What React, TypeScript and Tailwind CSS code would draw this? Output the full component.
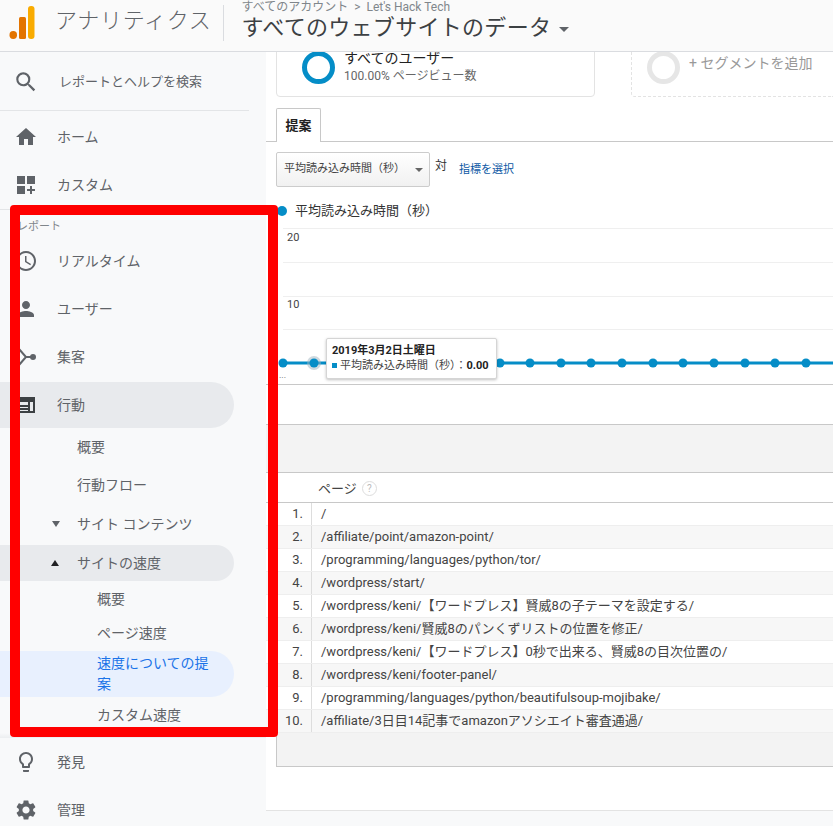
import type { ReactNode } from "react";
import { MdAccessTime, MdHome, MdLightbulbOutline, MdPerson, MdSearch, MdSettings } from "react-icons/md";

const PAGES = [
  "/",
  "/affiliate/point/amazon-point/",
  "/programming/languages/python/tor/",
  "/wordpress/start/",
  "/wordpress/keni/【ワードプレス】賢威8の子テーマを設定する/",
  "/wordpress/keni/賢威8のパンくずリストの位置を修正/",
  "/wordpress/keni/【ワードプレス】0秒で出来る、賢威8の目次位置の/",
  "/wordpress/keni/footer-panel/",
  "/programming/languages/python/beautifulsoup-mojibake/",
  "/affiliate/3日目14記事でamazonアソシエイト審査通過/",
];

const DOTS = [17, 48, 79, 110, 234, 264, 295, 325, 356, 387, 417, 448, 479, 509, 540];

function CustomIcon() {
  return (
    <svg width="24" height="24" viewBox="0 0 24 24" fill="#5f6368">
      <rect x="3" y="3" width="8" height="8" />
      <rect x="13" y="3" width="8" height="8" />
      <rect x="3" y="13" width="8" height="8" />
      <path d="M16 13h2v3h3v2h-3v3h-2v-3h-3v-2h3z" />
    </svg>
  );
}

function AcquisitionIcon() {
  return (
    <svg width="24" height="24" viewBox="0 0 24 24" fill="none" stroke="#5f6368" strokeWidth="2">
      <path d="M5 4l7 8-7 8M12 12h6" />
      <circle cx="19" cy="12" r="3" fill="#5f6368" stroke="none" />
    </svg>
  );
}

function BehaviorIcon() {
  return (
    <svg width="24" height="24" viewBox="0 0 24 24" fill="none">
      <path d="M3 4h18v5H3z" fill="#3c4043" />
      <path d="M4 5h16v14H4zM4 13h11M4 16h11M15 9v10" stroke="#3c4043" strokeWidth="2" />
    </svg>
  );
}

function NavRow({ icon, label }: { icon: ReactNode; label: string }) {
  return (
    <div className="flex h-[48px] items-center text-[14px] text-[#5f6368]">
      <div className="ml-[14px] flex w-[24px] justify-center">{icon}</div>
      <span className="ml-[19px]">{label}</span>
    </div>
  );
}

function Sidebar() {
  return (
    <aside className="w-[266px] shrink-0 bg-[#f8f9fa]">
      <div className="flex h-[59px] w-[249px] items-center border-b border-[#e3e5e7] pt-[2px] text-[13px] text-[#5f6368]">
        <MdSearch className="ml-[13px] text-[#5f6368]" size={26} />
        <span className="ml-[20px]">レポートとヘルプを検索</span>
      </div>
      <div className="mt-[2px]">
        <NavRow icon={<MdHome size={24} color="#5f6368" />} label="ホーム" />
        <NavRow icon={<CustomIcon />} label="カスタム" />
      </div>
      <div className="border-t border-[#e3e5e7]">
        <div className="flex h-[27px] items-end pl-[17px] text-[11px] text-[#80868b]">
          <span className="leading-[20px]">レポート</span>
        </div>
        <NavRow icon={<MdAccessTime size={24} color="#5f6368" />} label="リアルタイム" />
        <NavRow icon={<MdPerson size={24} color="#5f6368" />} label="ユーザー" />
        <NavRow icon={<AcquisitionIcon />} label="集客" />
        <div className="flex h-[48px] items-center">
          <div className="flex h-[46px] w-[234px] items-center rounded-r-full bg-[#e8eaed] text-[14px] text-[#5f6368]">
            <div className="ml-[14px] flex w-[24px] justify-center">
              <BehaviorIcon />
            </div>
            <span className="ml-[19px]">行動</span>
          </div>
        </div>
        <div className="flex h-[37px] items-center pl-[77px] text-[14px] text-[#5f6368]">概要</div>
        <div className="flex h-[38px] items-center pl-[77px] text-[14px] text-[#5f6368]">行動フロー</div>
        <div className="flex h-[40px] items-center text-[14px] text-[#5f6368]">
          <span className="ml-[52px] h-0 w-0 border-x-[4px] border-t-[6px] border-x-transparent border-t-[#5f6368]" />
          <span className="ml-[17px]">サイト コンテンツ</span>
        </div>
        <div className="mt-[1px] flex h-[36px] w-[234px] items-center rounded-r-full bg-[#e8eaed] text-[14px] text-[#5f6368]">
          <span className="ml-[51px] h-0 w-0 border-x-[4px] border-b-[6px] border-x-transparent border-b-[#202124]" />
          <span className="ml-[18px]">サイトの速度</span>
        </div>
        <div className="flex h-[36px] items-center pl-[97px] text-[14px] text-[#5f6368]">概要</div>
        <div className="flex h-[34px] items-center pb-[2px] pl-[97px] text-[14px] text-[#5f6368]">ページ速度</div>
        <div className="flex h-[46px] w-[234px] items-center rounded-r-full bg-[#e8f0fe] pl-[97px] text-[14px] leading-[21px] text-[#1a73e8]">
          <span className="w-[118px]">速度についての提案</span>
        </div>
        <div className="flex h-[36px] items-center pl-[97px] text-[14px] text-[#5f6368]">カスタム速度</div>
        <div className="h-[5px] bg-gradient-to-b from-[#f8f9fa] to-[#eceef0]" />
      </div>
      <NavRow icon={<MdLightbulbOutline size={24} color="#5f6368" />} label="発見" />
      <NavRow icon={<MdSettings size={24} color="#5f6368" />} label="管理" />
    </aside>
  );
}

function Chart() {
  return (
    <div className="relative h-[161px] border-b border-[#c8c8c8]">
      <svg width="567" height="160" className="block">
        {[4, 38, 72, 105].map((y) => (
          <line key={y} x1="17" x2="567" y1={y + 0.5} y2={y + 0.5} stroke="#efefef" />
        ))}
        <line x1="17" x2="567" y1="139" y2="139" stroke="#058dc7" strokeWidth="3" />
        <circle cx="48" cy="139" r="7" fill="#9fb4c0" opacity="0.5" />
        {DOTS.map((x) => (
          <circle key={x} cx={x} cy="139" r="4.5" fill="#058dc7" />
        ))}
      </svg>
      <span className="absolute left-[21px] top-[7px] text-[11px] leading-[14px] text-[#444]">20</span>
      <span className="absolute left-[21px] top-[74px] text-[11px] leading-[14px] text-[#444]">10</span>
      <span className="absolute left-[13px] top-[146px] text-[9px] leading-[10px] text-[#666]">...</span>
      <div className="absolute left-[60px] top-[114px] h-[41px] w-[171px] rounded-[2px] border border-[#d5d5d5] bg-white px-[5px] pt-[4px] shadow-[0_1px_3px_rgba(0,0,0,0.25)]">
        <div className="text-[11px] font-bold leading-[15px] text-[#222]">2019年3月2日土曜日</div>
        <div className="flex items-center text-[11px] leading-[15px] text-[#444]">
          <span className="mr-[3px] h-[5px] w-[5px] bg-[#058dc7]" />
          <span>平均読み込み時間（秒）：</span>
          <span className="font-bold text-[#222]">0.00</span>
        </div>
      </div>
    </div>
  );
}

function PageTable() {
  return (
    <div className="border-t border-[#c8c8c8]">
      <div className="flex h-[30px] items-center border-b border-[#c8c8c8] pl-[52px] pt-[2px] text-[13px] text-[#444]">
        <span>ページ</span>
        <span className="ml-[5px] flex h-[15px] w-[15px] items-center justify-center rounded-full border border-[#ddd] text-[10px] text-[#bbb]">
          ?
        </span>
      </div>
      {PAGES.map((page, i) => (
        <div
          key={i}
          className={`flex h-[23px] items-center border-b border-[#eeeeee] text-[13px] leading-[22px] text-[#444] ${
            i % 2 === 1 ? "bg-[#f7f7f7]" : "bg-white"
          }`}
        >
          <div className="h-full w-[46px] shrink-0 border-r border-[#dddddd] pr-[8px] text-right">{i + 1}.</div>
          <div className="pl-[9px] whitespace-nowrap">{page}</div>
        </div>
      ))}
      <div className="ml-[10px] h-[34px] border-b border-l border-[#c8c8c8] bg-[#f3f3f3]" />
    </div>
  );
}

function Main() {
  return (
    <main className="min-w-0 flex-1 overflow-hidden">
      <div className="-mt-[20px] flex pl-[10px]">
        <div className="flex h-[65px] w-[319px] items-start rounded-[4px] border border-[#e3e3e3] bg-white">
          <span className="ml-[25px] mt-[18px] h-[33px] w-[33px] rounded-full border-[5px] border-[#058dc7]" />
          <div className="ml-[9px] mt-[15px]">
            <div className="text-[14px] leading-[20px] text-[#222]">すべてのユーザー</div>
            <div className="text-[12px] leading-[16px] text-[#666]">100.00% ページビュー数</div>
          </div>
        </div>
        <div className="ml-[36px] flex h-[65px] flex-1 items-start rounded-l-[4px] border border-r-0 border-dashed border-[#e3e3e3] bg-white">
          <span className="ml-[15px] mt-[18px] h-[33px] w-[33px] rounded-full border-[5px] border-[#e6e6e6]" />
          <span className="ml-[9px] mt-[20px] text-[14px] leading-[20px] text-[#999]">+ セグメントを追加</span>
        </div>
      </div>
      <div className="mt-[11px] h-[34px] border-b border-[#c8c8c8] pl-[10px]">
        <div className="flex h-[34px] w-[45px] items-center justify-center rounded-t-[2px] border border-b-0 border-[#c8c8c8] bg-white text-[13px] font-bold text-[#222]">
          提案
        </div>
      </div>
      <div className="mt-[10px] flex pl-[10px]">
        <div className="flex h-[35px] w-[154px] items-center rounded-[2px] border border-[#ccc] bg-gradient-to-b from-white to-[#f1f1f1] pl-[7px] text-[11px] text-[#444]">
          <span>平均読み込み時間（秒）</span>
          <span className="ml-[10px] h-0 w-0 border-x-[4px] border-t-[4px] border-x-transparent border-t-[#666]" />
        </div>
        <span className="ml-[5px] mt-[5px] text-[12px] leading-[18px] text-[#333]">対</span>
        <span className="ml-[12px] mt-[9px] text-[11px] leading-[18px] text-[#0b57a4]">指標を選択</span>
      </div>
      <div className="mt-[12px] flex h-[24px] items-center pl-[11px] text-[13px] text-[#333]">
        <span className="h-[10px] w-[10px] rounded-full bg-[#058dc7]" />
        <span className="ml-[8px]">平均読み込み時間（秒）</span>
      </div>
      <div className="mt-[1px]">
        <Chart />
      </div>
      <div className="mt-[39px] h-[48px] border-t border-[#c8c8c8] bg-[#f3f3f3]" />
      <PageTable />
      <div className="mt-[43px] h-[17px] border-t border-[#e3e3e3] bg-[#f8f9fa]" />
    </main>
  );
}

export default function App() {
  return (
    <div className="relative h-[826px] w-[833px] overflow-hidden bg-white font-['Roboto','Noto_Sans_CJK_JP',sans-serif]">
      <header className="flex h-[52px] items-center border-b border-[#dadce0] bg-[#fafafa]">
        <svg width="26" height="36" viewBox="0 0 26 36" className="ml-[9px] -mt-[4px]">
          <rect x="0.5" y="25" width="7.5" height="8" rx="3.7" fill="#e37400" />
          <rect x="10" y="11" width="7" height="22" rx="1.5" fill="#e37400" />
          <rect x="19" y="0" width="6.5" height="33" rx="3" fill="#f9ab00" />
        </svg>
        <span className="ml-[20px] -mt-[10px] text-[22px] font-light tracking-[0.7px] text-[#5f6368]">アナリティクス</span>
        <div className="ml-[12px] -mt-[6px] h-[36px] w-px bg-[#dadce0]" />
        <div className="ml-[17px] -mt-[10px]">
          <div className="flex text-[12px] leading-[14px] text-[#80868b]">
            <span>すべてのアカウント</span>
            <span className="mx-[6px]">&gt;</span>
            <span>Let's Hack Tech</span>
          </div>
          <div className="flex items-center text-[22px] leading-[28px] tracking-[0.3px] text-[#3c4043]">
            すべてのウェブサイトのデータ
            <span className="ml-[8px] mt-[3px] h-0 w-0 border-x-[5px] border-t-[5px] border-x-transparent border-t-[#5f6368]" />
          </div>
        </div>
      </header>
      <div className="flex h-[774px]">
        <Sidebar />
        <Main />
      </div>
      {/* red annotation drawn over the screenshot */}
      <div className="absolute left-[10px] top-[205px] h-[532px] w-[268px] rounded-[4px] border-[10px] border-[#ff0000]" />
    </div>
  );
}
